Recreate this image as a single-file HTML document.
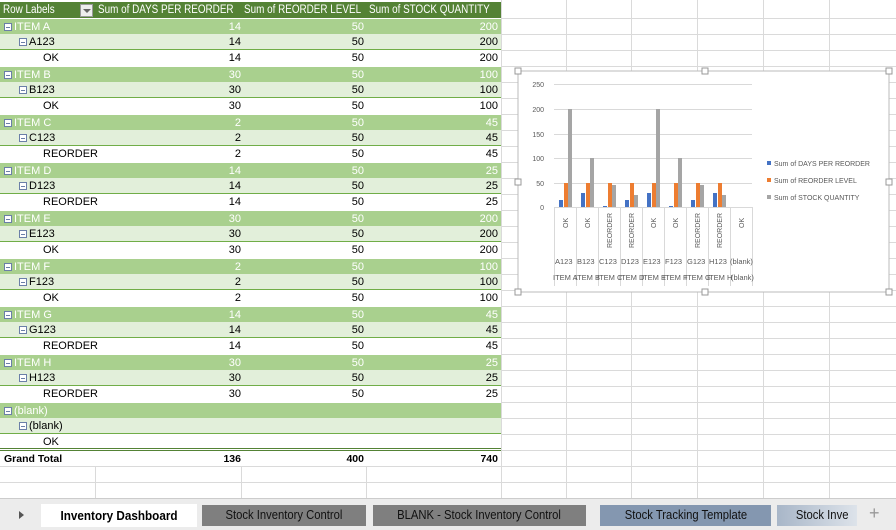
<!DOCTYPE html><html><head><style>
body{margin:0;width:896px;height:529px;position:relative;overflow:hidden;background:#fff;font-family:"Liberation Sans",sans-serif;font-size:11px}
.r{position:absolute;left:0;width:501px;height:16px;line-height:16px;box-sizing:border-box}
.r span{position:absolute;top:0}
.c2{right:260px}.c3{right:137px}.c4{right:3px}
.it{background:#a9d08e;color:#fff;border-top:1px solid #fff}
.sb{background:#e2efda;color:#000;border-bottom:1px solid #70ad47}
.ok{background:#fff;color:#000}
.mb{display:inline-block;width:8px;height:8px;border:1px solid #6b7fa8;background:#fff;position:relative;top:0px;margin-right:2px;box-sizing:border-box;vertical-align:middle}
.mb:after{content:"";position:absolute;left:1px;top:3px;width:4px;height:1px;background:#6b7fa8}
.hd span{transform:scaleX(0.86);transform-origin:left center;white-space:nowrap}
.tab{position:absolute;top:505px;height:21px;line-height:21px;text-align:center;font-size:12.5px}
.tab b,.tab i{display:inline-block;transform:scaleX(0.9);font-style:normal}
</style></head><body>
<svg style="position:absolute;left:0;top:0" width="896" height="529">
<g stroke="#dadada" stroke-width="1">
<line x1="566.5" y1="0" x2="566.5" y2="498"/><line x1="631.5" y1="0" x2="631.5" y2="498"/><line x1="697.5" y1="0" x2="697.5" y2="498"/><line x1="763.5" y1="0" x2="763.5" y2="498"/><line x1="829.5" y1="0" x2="829.5" y2="498"/>
<line x1="501.5" y1="0" x2="501.5" y2="498"/>
<line x1="95.5" y1="466" x2="95.5" y2="498"/><line x1="241.5" y1="466" x2="241.5" y2="498"/><line x1="366.5" y1="466" x2="366.5" y2="498"/>
<line x1="0" y1="482.5" x2="896" y2="482.5"/><line x1="0" y1="466.5" x2="896" y2="466.5"/>
</g>
</svg>
<svg style="position:absolute;left:501px;top:0" width="395" height="498"><g stroke="#dadada">
<line x1="0" y1="18.5" x2="395" y2="18.5"/><line x1="0" y1="34.5" x2="395" y2="34.5"/><line x1="0" y1="50.5" x2="395" y2="50.5"/><line x1="0" y1="66.5" x2="395" y2="66.5"/><line x1="0" y1="82.5" x2="395" y2="82.5"/><line x1="0" y1="98.5" x2="395" y2="98.5"/><line x1="0" y1="114.5" x2="395" y2="114.5"/><line x1="0" y1="130.5" x2="395" y2="130.5"/><line x1="0" y1="146.5" x2="395" y2="146.5"/><line x1="0" y1="162.5" x2="395" y2="162.5"/><line x1="0" y1="178.5" x2="395" y2="178.5"/><line x1="0" y1="194.5" x2="395" y2="194.5"/><line x1="0" y1="210.5" x2="395" y2="210.5"/><line x1="0" y1="226.5" x2="395" y2="226.5"/><line x1="0" y1="242.5" x2="395" y2="242.5"/><line x1="0" y1="258.5" x2="395" y2="258.5"/><line x1="0" y1="274.5" x2="395" y2="274.5"/><line x1="0" y1="290.5" x2="395" y2="290.5"/><line x1="0" y1="306.5" x2="395" y2="306.5"/><line x1="0" y1="322.5" x2="395" y2="322.5"/><line x1="0" y1="338.5" x2="395" y2="338.5"/><line x1="0" y1="354.5" x2="395" y2="354.5"/><line x1="0" y1="370.5" x2="395" y2="370.5"/><line x1="0" y1="386.5" x2="395" y2="386.5"/><line x1="0" y1="402.5" x2="395" y2="402.5"/><line x1="0" y1="418.5" x2="395" y2="418.5"/><line x1="0" y1="434.5" x2="395" y2="434.5"/><line x1="0" y1="450.5" x2="395" y2="450.5"/>
</g></svg>

<div class="r hd" style="top:2px;background:#548235;color:#fff;font-size:11.5px"><span style="left:3px">Row Labels</span><span style="left:98px">Sum of DAYS PER REORDER</span><span style="left:244px">Sum of REORDER LEVEL</span><span style="left:369px">Sum of STOCK QUANTITY</span></div>
<div style="position:absolute;left:80px;top:4px;width:13px;height:13px;background:#eee;border:1px solid #999;box-sizing:border-box"><div style="position:absolute;left:2px;top:4px;border-left:4px solid transparent;border-right:4px solid transparent;border-top:4px solid #666"></div></div>

<div class="r it" style="top:18px"><span style="left:4px"><i class="mb"></i>ITEM A</span><span class="c2">14</span><span class="c3">50</span><span class="c4">200</span></div>
<div class="r sb" style="top:34px"><span style="left:19px"><i class="mb"></i>A123</span><span class="c2">14</span><span class="c3">50</span><span class="c4">200</span></div>
<div class="r ok" style="top:50px"><span style="left:43px">OK</span><span class="c2">14</span><span class="c3">50</span><span class="c4">200</span></div>
<div class="r it" style="top:66px"><span style="left:4px"><i class="mb"></i>ITEM B</span><span class="c2">30</span><span class="c3">50</span><span class="c4">100</span></div>
<div class="r sb" style="top:82px"><span style="left:19px"><i class="mb"></i>B123</span><span class="c2">30</span><span class="c3">50</span><span class="c4">100</span></div>
<div class="r ok" style="top:98px"><span style="left:43px">OK</span><span class="c2">30</span><span class="c3">50</span><span class="c4">100</span></div>
<div class="r it" style="top:114px"><span style="left:4px"><i class="mb"></i>ITEM C</span><span class="c2">2</span><span class="c3">50</span><span class="c4">45</span></div>
<div class="r sb" style="top:130px"><span style="left:19px"><i class="mb"></i>C123</span><span class="c2">2</span><span class="c3">50</span><span class="c4">45</span></div>
<div class="r ok" style="top:146px"><span style="left:43px">REORDER</span><span class="c2">2</span><span class="c3">50</span><span class="c4">45</span></div>
<div class="r it" style="top:162px"><span style="left:4px"><i class="mb"></i>ITEM D</span><span class="c2">14</span><span class="c3">50</span><span class="c4">25</span></div>
<div class="r sb" style="top:178px"><span style="left:19px"><i class="mb"></i>D123</span><span class="c2">14</span><span class="c3">50</span><span class="c4">25</span></div>
<div class="r ok" style="top:194px"><span style="left:43px">REORDER</span><span class="c2">14</span><span class="c3">50</span><span class="c4">25</span></div>
<div class="r it" style="top:210px"><span style="left:4px"><i class="mb"></i>ITEM E</span><span class="c2">30</span><span class="c3">50</span><span class="c4">200</span></div>
<div class="r sb" style="top:226px"><span style="left:19px"><i class="mb"></i>E123</span><span class="c2">30</span><span class="c3">50</span><span class="c4">200</span></div>
<div class="r ok" style="top:242px"><span style="left:43px">OK</span><span class="c2">30</span><span class="c3">50</span><span class="c4">200</span></div>
<div class="r it" style="top:258px"><span style="left:4px"><i class="mb"></i>ITEM F</span><span class="c2">2</span><span class="c3">50</span><span class="c4">100</span></div>
<div class="r sb" style="top:274px"><span style="left:19px"><i class="mb"></i>F123</span><span class="c2">2</span><span class="c3">50</span><span class="c4">100</span></div>
<div class="r ok" style="top:290px"><span style="left:43px">OK</span><span class="c2">2</span><span class="c3">50</span><span class="c4">100</span></div>
<div class="r it" style="top:306px"><span style="left:4px"><i class="mb"></i>ITEM G</span><span class="c2">14</span><span class="c3">50</span><span class="c4">45</span></div>
<div class="r sb" style="top:322px"><span style="left:19px"><i class="mb"></i>G123</span><span class="c2">14</span><span class="c3">50</span><span class="c4">45</span></div>
<div class="r ok" style="top:338px"><span style="left:43px">REORDER</span><span class="c2">14</span><span class="c3">50</span><span class="c4">45</span></div>
<div class="r it" style="top:354px"><span style="left:4px"><i class="mb"></i>ITEM H</span><span class="c2">30</span><span class="c3">50</span><span class="c4">25</span></div>
<div class="r sb" style="top:370px"><span style="left:19px"><i class="mb"></i>H123</span><span class="c2">30</span><span class="c3">50</span><span class="c4">25</span></div>
<div class="r ok" style="top:386px"><span style="left:43px">REORDER</span><span class="c2">30</span><span class="c3">50</span><span class="c4">25</span></div>
<div class="r it" style="top:402px"><span style="left:4px"><i class="mb"></i>(blank)</span></div>
<div class="r sb" style="top:418px"><span style="left:19px"><i class="mb"></i>(blank)</span></div>
<div class="r ok" style="top:434px;border-bottom:3px double #548235;height:17px"><span style="left:43px">OK</span></div>
<div class="r" style="top:451px;font-weight:bold;font-size:10.5px"><span style="left:4px">Grand Total</span><span class="c2">136</span><span class="c3">400</span><span class="c4">740</span></div>

<svg style="position:absolute;left:512px;top:66px" width="384" height="234" font-family="Liberation Sans" font-size="7" fill="#595959">
<rect x="6" y="5" width="371" height="221" fill="#fff" stroke="#bbb"/>
<g fill="#fff" stroke="#999"><rect x="3" y="2" width="6" height="6"/><rect x="190" y="2" width="6" height="6"/><rect x="374" y="2" width="6" height="6"/><rect x="3" y="113" width="6" height="6"/><rect x="374" y="113" width="6" height="6"/><rect x="3" y="223" width="6" height="6"/><rect x="190" y="223" width="6" height="6"/><rect x="374" y="223" width="6" height="6"/></g>
<g stroke="#d9d9d9"><line x1="42" y1="18.5" x2="240" y2="18.5"/><line x1="42" y1="43.5" x2="240" y2="43.5"/><line x1="42" y1="68.5" x2="240" y2="68.5"/><line x1="42" y1="92.5" x2="240" y2="92.5"/><line x1="42" y1="117.5" x2="240" y2="117.5"/><line x1="42" y1="141.5" x2="240" y2="141.5"/>
<line x1="42.5" y1="141" x2="42.5" y2="220"/><line x1="64.5" y1="141" x2="64.5" y2="220"/><line x1="86.5" y1="141" x2="86.5" y2="220"/><line x1="108.5" y1="141" x2="108.5" y2="220"/><line x1="130.5" y1="141" x2="130.5" y2="220"/><line x1="152.5" y1="141" x2="152.5" y2="220"/><line x1="174.5" y1="141" x2="174.5" y2="220"/><line x1="196.5" y1="141" x2="196.5" y2="220"/><line x1="218.5" y1="141" x2="218.5" y2="220"/><line x1="240.5" y1="141" x2="240.5" y2="220"/></g>
<g text-anchor="end"><text x="32" y="21">250</text><text x="32" y="46">200</text><text x="32" y="71">150</text><text x="32" y="95">100</text><text x="32" y="120">50</text><text x="32" y="144">0</text></g>
<g fill="#4472c4"><rect x="47" y="134" width="4" height="7"/><rect x="69" y="127" width="4" height="14"/><rect x="91" y="140" width="4" height="1"/><rect x="113" y="134" width="4" height="7"/><rect x="135" y="127" width="4" height="14"/><rect x="157" y="140" width="4" height="1"/><rect x="179" y="134" width="4" height="7"/><rect x="201" y="127" width="4" height="14"/></g>
<g fill="#ed7d31"><rect x="52" y="117" width="4" height="24"/><rect x="74" y="117" width="4" height="24"/><rect x="96" y="117" width="4" height="24"/><rect x="118" y="117" width="4" height="24"/><rect x="140" y="117" width="4" height="24"/><rect x="162" y="117" width="4" height="24"/><rect x="184" y="117" width="4" height="24"/><rect x="206" y="117" width="4" height="24"/></g>
<g fill="#a5a5a5"><rect x="56" y="43" width="4" height="98"/><rect x="78" y="92" width="4" height="49"/><rect x="100" y="119" width="4" height="22"/><rect x="122" y="129" width="4" height="12"/><rect x="144" y="43" width="4" height="98"/><rect x="166" y="92" width="4" height="49"/><rect x="188" y="119" width="4" height="22"/><rect x="210" y="129" width="4" height="12"/></g>
<g>
<text transform="translate(56,162) rotate(-90)">OK</text><text transform="translate(78,162) rotate(-90)">OK</text><text transform="translate(100,182) rotate(-90)">REORDER</text><text transform="translate(122,182) rotate(-90)">REORDER</text><text transform="translate(144,162) rotate(-90)">OK</text><text transform="translate(166,162) rotate(-90)">OK</text><text transform="translate(188,182) rotate(-90)">REORDER</text><text transform="translate(210,182) rotate(-90)">REORDER</text><text transform="translate(232,162) rotate(-90)">OK</text>
</g>
<g font-size="7.5"><text x="43" y="198">A123</text><text x="65" y="198">B123</text><text x="87" y="198">C123</text><text x="109" y="198">D123</text><text x="131" y="198">E123</text><text x="153" y="198">F123</text><text x="175" y="198">G123</text><text x="197" y="198">H123</text><text x="218" y="198">(blank)</text>
<text x="41" y="214">ITEM A</text><text x="63" y="214">ITEM B</text><text x="85" y="214">ITEM C</text><text x="107" y="214">ITEM D</text><text x="129" y="214">ITEM E</text><text x="151" y="214">ITEM F</text><text x="173" y="214">ITEM G</text><text x="195" y="214">ITEM H</text><text x="219" y="214">(blank)</text></g>
<rect x="255" y="95" width="4" height="4" fill="#4472c4"/><text x="262" y="100">Sum of DAYS PER REORDER</text>
<rect x="255" y="112" width="4" height="4" fill="#ed7d31"/><text x="262" y="117">Sum of REORDER LEVEL</text>
<rect x="255" y="129" width="4" height="4" fill="#a5a5a5"/><text x="262" y="134">Sum of STOCK QUANTITY</text>
</svg>

<div style="position:absolute;left:0;top:498px;width:896px;height:31px;background:#ececec;border-top:1px solid #ccc"></div>
<div style="position:absolute;left:19px;top:511px;border-top:4px solid transparent;border-bottom:4px solid transparent;border-left:5px solid #555"></div>
<div class="tab" style="left:41px;width:156px;background:#fff;font-size:13px;top:504px;height:23px;line-height:23px"><b>Inventory Dashboard</b></div>
<div class="tab" style="left:202px;width:164px;background:#7f7f7f;color:#111"><i>Stock Inventory Control</i></div>
<div class="tab" style="left:373px;width:213px;background:#7f7f7f;color:#111"><i>BLANK - Stock Inventory Control</i></div>
<div class="tab" style="left:600px;width:171px;background:#8497b0;color:#111"><i>Stock Tracking Template</i></div>
<div class="tab" style="left:777px;width:80px;background:linear-gradient(90deg,#a8b6c8,#dde3ea);color:#111;text-align:left;padding-left:16px;box-sizing:border-box"><i>Stock Inve</i></div>
<div style="position:absolute;left:869px;top:503px;font-size:18px;color:#999">+</div>
</body></html>
